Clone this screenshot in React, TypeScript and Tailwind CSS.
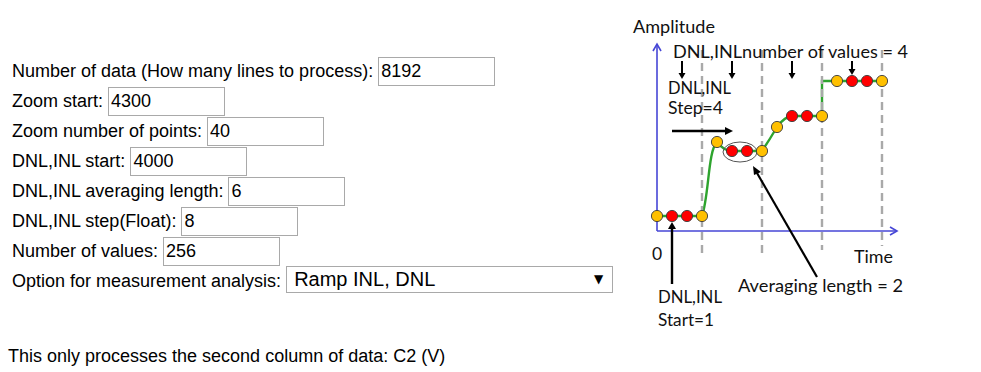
import React from 'react';

const fields = [
  { label: 'Number of data (How many lines to process):', value: '8192' },
  { label: 'Zoom start:', value: '4300' },
  { label: 'Zoom number of points:', value: '40' },
  { label: 'DNL,INL start:', value: '4000' },
  { label: 'DNL,INL averaging length:', value: '6' },
  { label: 'DNL,INL step(Float):', value: '8' },
  { label: 'Number of values:', value: '256' },
];

const ORANGE = '#ffc000';
const RED = '#ff0000';
const GREEN = '#2ea42e';
const BLUE = '#4646d6';

const Dot = ({ x, y, c }: { x: number; y: number; c: string }) => (
  <circle cx={x} cy={y} r={5.6} fill={c} stroke="#3a3a3a" strokeWidth={0.9} />
);

const Diagram = () => {
  const label = { fontFamily: 'Lato, "Open Sans", sans-serif', fontSize: 17.5, fill: '#111' };
  const levels: [number, number, string][] = [
    [657, 216, ORANGE], [672, 216, RED], [687, 216, RED], [702, 216, ORANGE],
    [717, 142, ORANGE], [732, 151, RED], [747, 151, RED], [762, 151, ORANGE],
    [777, 127, ORANGE], [792, 116, RED], [807, 116, RED], [822, 116, ORANGE],
    [837, 81, ORANGE], [852, 81, RED], [867, 81, RED], [882, 81, ORANGE],
  ];
  return (
    <svg width={300} height={330} viewBox="630 10 300 330" className="mt-[10px] shrink-0">
      {/* green signal */}
      <path
        d="M657 216 L702 216 C709 196 708 150 717 142 Q724 151 732 151 L762 151 Q770 139 777 127 Q784 117 792 116 L822 116 L822 81 L882 81"
        fill="none"
        stroke={GREEN}
        strokeWidth={2.4}
      />
      {/* grid */}
      {[
        [702, 256],
        [762, 256],
        [822, 250],
        [882, 246],
      ].map(([x, y2]) => (
        <line key={x} x1={x} y1={50} x2={x} y2={y2} stroke="#a9a9a9" strokeWidth={2.4} strokeDasharray="8 5" />
      ))}
      {/* axes */}
      <line x1={657} y1={231} x2={657} y2={45} stroke={BLUE} strokeWidth={1.6} />
      <polyline points="653,51 657,44 661,51" fill="none" stroke={BLUE} strokeWidth={1.6} />
      <line x1={657} y1={231} x2={897} y2={231} stroke={BLUE} strokeWidth={1.6} />
      <polyline points="890,227 897,231 890,235" fill="none" stroke={BLUE} strokeWidth={1.6} />

      {/* averaging ellipse */}
      <ellipse cx={740} cy={152} rx={17} ry={10} fill="none" stroke="#555" strokeWidth={1} />

      {levels.map(([x, y, c], i) => (
        <Dot key={i} x={x} y={y} c={c} />
      ))}

      {/* small down arrows */}
      {[
        [682, 79],
        [732, 79],
        [792, 79],
        [852, 75],
      ].map(([x, y2]) => (
        <g key={x}>
          <line x1={x} y1={61} x2={x} y2={y2 - 5} stroke="#000" strokeWidth={2} />
          <polygon points={`${x - 3.5},${y2 - 6} ${x + 3.5},${y2 - 6} ${x},${y2}`} fill="#000" />
        </g>
      ))}

      {/* step arrow */}
      <line x1={672} y1={131} x2={726} y2={131} stroke="#000" strokeWidth={2.6} />
      <polygon points="725,127 733,131 725,135" fill="#000" />

      {/* start arrow */}
      <line x1={672} y1={284} x2={672} y2={228} stroke="#000" strokeWidth={2.4} />
      <polygon points="668,229 672,222 676,229" fill="#000" />

      {/* averaging arrow */}
      <line x1={817} y1={277} x2={757} y2={173} stroke="#000" strokeWidth={2.2} />
      <polygon points="753,166 761,172 754,175" fill="#000" />

      <text x={633} y={33} {...label} textLength={82} lengthAdjust="spacingAndGlyphs">Amplitude</text>
      <text x={673} y={58} {...label} textLength={235} lengthAdjust="spacingAndGlyphs">DNL,INLnumber of values = 4</text>
      <text x={668} y={94} {...label} textLength={63} lengthAdjust="spacingAndGlyphs">DNL,INL</text>
      <text x={668} y={114} {...label} textLength={55} lengthAdjust="spacingAndGlyphs">Step=4</text>
      <text x={652} y={260} {...label}>0</text>
      <text x={854} y={263} {...label} textLength={39} lengthAdjust="spacingAndGlyphs">Time</text>
      <text x={738} y={292} {...label} textLength={165} lengthAdjust="spacingAndGlyphs">Averaging length = 2</text>
      <text x={658} y={303} {...label} textLength={64} lengthAdjust="spacingAndGlyphs">DNL,INL</text>
      <text x={658} y={326} {...label} textLength={56} lengthAdjust="spacingAndGlyphs">Start=1</text>
    </svg>
  );
};

const App = () => {
  return (
    <div className="bg-white text-black font-['Liberation_Sans',Arial,sans-serif] text-[18px] w-[981px] h-[372px] overflow-hidden">
      <div className="flex">
        <div className="w-[630px] shrink-0 pt-[56px] pl-[12px]">
          {fields.map((f) => (
            <div key={f.label} className="h-[30px] flex items-center leading-[21px]">
              <span className="mr-[5px] whitespace-nowrap">{f.label}</span>
              <input
                defaultValue={f.value}
                className="h-[29px] w-[117px] border border-[#a9a9a9] px-[2px] text-[18px] text-black outline-none"
              />
            </div>
          ))}
          <div className="h-[30px] flex items-center leading-[21px]">
            <span className="mr-[5px] whitespace-nowrap">Option for measurement analysis:</span>
            <div className="h-[27px] w-[327px] border border-[#a9a9a9] flex items-center justify-between pl-[7px] pr-[9px] -mt-[4px]">
              <span className="text-[20px] leading-[22px]">Ramp INL, DNL</span>
              <span className="text-[12px] font-['DejaVu_Sans',sans-serif]">▼</span>
            </div>
          </div>
        </div>
        <Diagram />
      </div>
      <p className="pl-[8px] mt-[4px] leading-[24px]">This only processes the second column of data: C2 (V)</p>
    </div>
  );
};

export default App;
